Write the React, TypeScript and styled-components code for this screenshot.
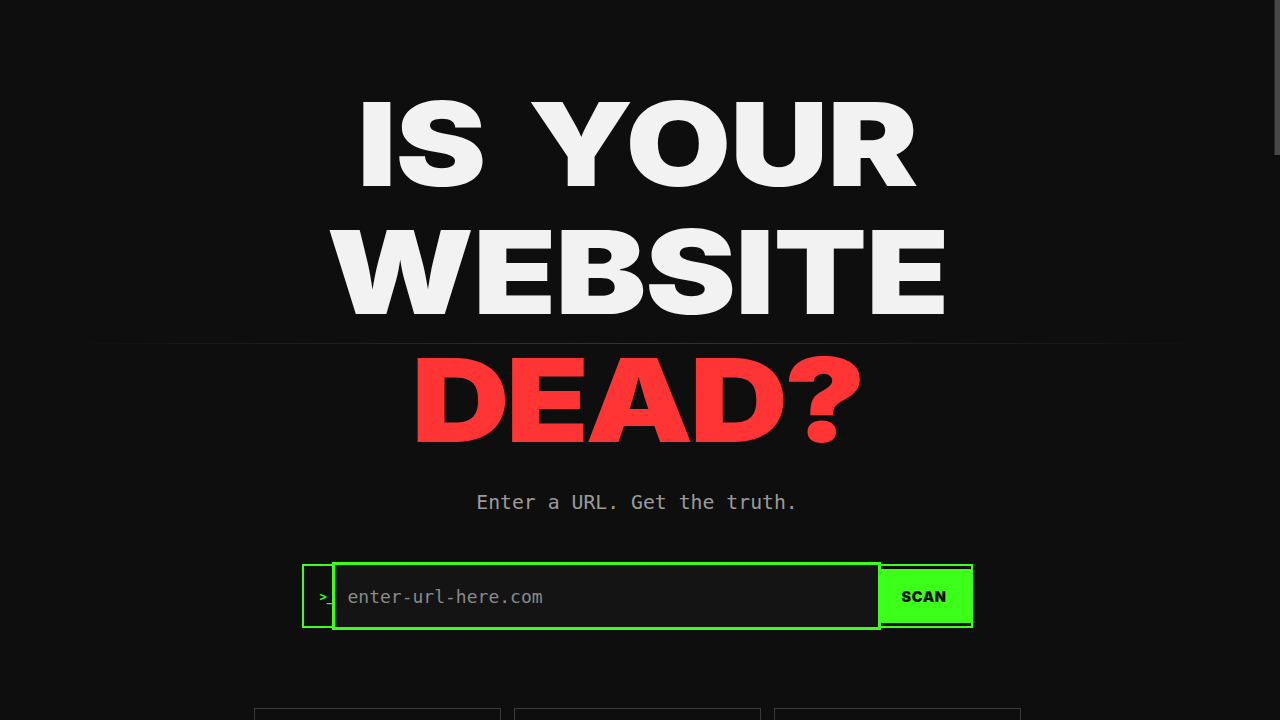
import styled, { createGlobalStyle } from "styled-components";

const GlobalStyle = createGlobalStyle`
  html, body {
    margin: 0;
    padding: 0;
    background: #0e0e0e;
  }
  body {
    font-family: "Inter", "Liberation Sans", sans-serif;
    color: #f2f2f2;
  }
`;

const features = [
  { title: "UPTIME", text: "Is the server even answering?" },
  { title: "SPEED", text: "How long until the first byte lands?" },
  { title: "HEALTH", text: "Broken links, dead scripts, rot." },
];

export default function App() {
  return (
    <>
      <GlobalStyle />
      <Page>
        <Hero>
          <Title>
            <Line $spaced>IS YOUR</Line>
            <Line>WEBSITE</Line>
            <Line $red>DEAD?</Line>
          </Title>
          <Tagline>Enter a URL. Get the truth.</Tagline>
          <SearchBox>
            <Prompt>&gt;_</Prompt>
            <UrlInput placeholder="enter-url-here.com" />
            <ScanButton>SCAN</ScanButton>
          </SearchBox>
        </Hero>
        <Cards>
          {features.map((f) => (
            <Card key={f.title}>
              <CardTitle>{f.title}</CardTitle>
              <CardText>{f.text}</CardText>
            </Card>
          ))}
        </Cards>
      </Page>
      <ScrollThumb />
    </>
  );
}

const Page = styled.main`
  min-height: 3345px;
  padding-right: 6px;
  display: flex;
  flex-direction: column;
  align-items: center;
`;

const ScrollThumb = styled.div`
  position: fixed;
  top: 0;
  right: 0;
  width: 6px;
  height: 155px;
  background: #474747;
  border-left: 1px solid #2a2a2a;
  box-sizing: border-box;
`;

const Hero = styled.section`
  position: relative;
  width: 100%;
  display: flex;
  flex-direction: column;
  align-items: center;
  padding-top: 80px;

  &::before {
    content: "";
    position: absolute;
    top: 343px;
    left: 60px;
    right: 60px;
    height: 1px;
    background: linear-gradient(
      90deg,
      rgba(57, 255, 20, 0) 0%,
      rgba(57, 255, 20, 0.24) 50%,
      rgba(57, 255, 20, 0) 100%
    );
  }
`;

const Title = styled.h1`
  position: relative;
  margin: 0;
  display: flex;
  flex-direction: column;
  align-items: center;
  font-family: "Inter", "Liberation Sans", sans-serif;
  font-weight: 900;
  font-size: 116px;
  line-height: 128px;
`;

const Line = styled.span<{ $red?: boolean; $spaced?: boolean }>`
  display: inline-block;
  transform: scaleX(1.176);
  letter-spacing: ${(p) => (p.$red ? "-3.5px" : "-1px")};
  word-spacing: ${(p) => (p.$spaced ? "14px" : "0")};
  color: ${(p) => (p.$red ? "#ff3535" : "#f2f2f2")};
`;

const Tagline = styled.p`
  margin: 27px 0 0;
  font-family: "DejaVu Sans Mono", "Liberation Mono", monospace;
  font-size: 19.8px;
  color: #9b9b9b;
`;

const SearchBox = styled.div`
  margin-top: 50px;
  width: 671px;
  height: 64px;
  box-sizing: border-box;
  border: 2px solid #3cff1a;
  display: flex;
  align-items: center;
`;

const Prompt = styled.span`
  width: 28px;
  flex: none;
  padding-left: 16px;
  box-sizing: border-box;
  white-space: nowrap;
  font-family: "DejaVu Sans Mono", "Liberation Mono", monospace;
  font-size: 12px;
  font-weight: bold;
  color: #3cff1a;
  margin-top: 2px;
`;

const UrlInput = styled.input`
  flex: none;
  width: 549px;
  height: 68px;
  box-sizing: border-box;
  border: 3px solid #3cff1a;
  background: #141414;
  padding: 0 13px;
  outline: none;
  font-family: "DejaVu Sans Mono", "Liberation Mono", monospace;
  font-size: 18px;
  color: #e0e0e0;

  &::placeholder {
    color: #8a8a8a;
  }
`;

const ScanButton = styled.button`
  flex: 1;
  height: 54px;
  margin-left: -3px;
  border: none;
  background: #3cff1a;
  font-family: "Inter", "Liberation Sans", sans-serif;
  font-weight: 900;
  font-size: 14.5px;
  letter-spacing: 0.6px;
  color: #0e0e0e;
  cursor: pointer;
`;

const Cards = styled.div`
  margin-top: 80px;
  display: grid;
  grid-template-columns: repeat(3, 247px);
  gap: 13px;
`;

const Card = styled.div`
  border: 1px solid #3a3a3a;
  padding: 28px 24px;
  min-height: 180px;
`;

const CardTitle = styled.h3`
  margin: 0 0 12px;
  font-family: "Inter", "Liberation Sans", sans-serif;
  font-weight: 900;
  font-size: 22px;
  color: #f2f2f2;
`;

const CardText = styled.p`
  margin: 0;
  font-family: "DejaVu Sans Mono", "Liberation Mono", monospace;
  font-size: 13px;
  color: #8a8a8a;
`;
